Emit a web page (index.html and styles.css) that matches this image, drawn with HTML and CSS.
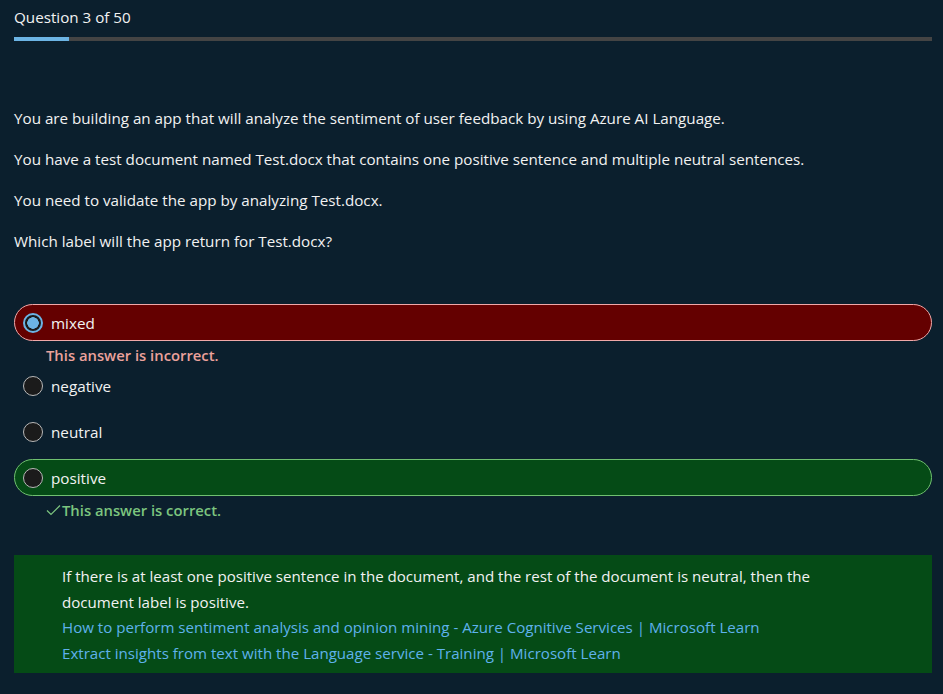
FILE: index.html
```html
<!DOCTYPE html>
<html>
<head>
<meta charset="utf-8">
<link rel="stylesheet" href="styles.css">
</head>
<body>
<div class="page">
  <header class="head">
    <div class="title">Question 3 of 50</div>
    <div class="progress"><div class="fill" style="width:6%"></div></div>
  </header>

  <section class="question">
    <p>You are building an app that will analyze the sentiment of user feedback by using Azure AI Language.</p>
    <p>You have a test document named Test.docx that contains one positive sentence and multiple neutral sentences.</p>
    <p>You need to validate the app by analyzing Test.docx.</p>
    <p>Which label will the app return for Test.docx?</p>
  </section>

  <section class="options">
    <div class="option wrong">
      <span class="radio checked"></span><span class="label">mixed</span>
    </div>
    <div class="feedback bad">This answer is incorrect.</div>
    <div class="option">
      <span class="radio"></span><span class="label">negative</span>
    </div>
    <div class="option">
      <span class="radio"></span><span class="label">neutral</span>
    </div>
    <div class="option right">
      <span class="radio"></span><span class="label">positive</span>
    </div>
    <div class="feedback good"><svg class="check" width="15" height="12" viewBox="0 0 15 12"><path d="M1 6.5 L5 10.5 L14 1.5" fill="none" stroke="currentColor" stroke-width="1.2"/></svg>This answer is correct.</div>
  </section>

  <section class="explain">
    <p>If there is at least one positive sentence in the document, and the rest of the document is neutral, then the document label is positive.</p>
    <a href="#">How to perform sentiment analysis and opinion mining - Azure Cognitive Services | Microsoft Learn</a>
    <a href="#">Extract insights from text with the Language service - Training | Microsoft Learn</a>
  </section>
</div>
</body>
</html>
```

FILE: styles.css
```css
html, body {
  margin: 0;
  padding: 0;
  background: #0b1f2d;
}
body {
  font-family: "Open Sans", "Noto Sans", sans-serif;
  font-size: 15.2px;
  color: #f2f2f2;
}
.page {
  padding: 0 11px 0 14px;
}
.head {
  padding-top: 7px;
}
.title {
  font-size: 15.2px;
  line-height: 20px;
}
.progress {
  margin-top: 10px;
  height: 4px;
  background: #444444;
}
.fill {
  height: 100%;
  background: #6cb4e4;
}
.question {
  padding-top: 67px;
}
.question p {
  margin: 0 0 20px 0;
  line-height: 21px;
}
.options {
  margin-top: 52px;
  display: flex;
  flex-direction: column;
}
.option {
  display: flex;
  align-items: center;
  height: 37px;
  box-sizing: border-box;
  padding-left: 8px;
  border-radius: 19px;
  border: 1px solid transparent;
  margin-bottom: 9px;
}
.option.wrong {
  background: #640000;
  border-color: #f0a8a8;
  margin-bottom: 4px;
}
.option.right {
  background: #054b16;
  border-color: #70c070;
  margin-bottom: 4px;
}
.radio {
  width: 20px;
  height: 20px;
  box-sizing: border-box;
  border-radius: 50%;
  border: 1px solid #b8b8b8;
  background: #1b1b1b;
  margin-right: 8px;
  flex: none;
}
.radio.checked {
  border: 2px solid #6cb4e4;
  background: radial-gradient(circle, #6cb4e4 0 5.5px, #1b1b1b 6px);
}
.label {
  font-size: 15.25px;
}
.feedback {
  padding-left: 32px;
  font-weight: 600;
  font-size: 14.8px;
  line-height: 20px;
  margin-bottom: 2px;
  display: flex;
  align-items: center;
}
.feedback.bad {
  color: #eba29c;
}
.feedback.good {
  color: #7cc57f;
  margin-bottom: 0;
}
.check {
  margin-right: 1px;
  color: #7cc57f;
}
.explain {
  margin-top: 35px;
  background: #054b16;
  padding: 9px 80px 7px 48px;
  display: flex;
  flex-direction: column;
  align-items: flex-start;
  font-size: 15.1px;
}
.explain p {
  margin: 0;
  line-height: 25.5px;
}
.explain a {
  color: #5fb2ec;
  text-decoration: none;
  line-height: 25.5px;
}
```
